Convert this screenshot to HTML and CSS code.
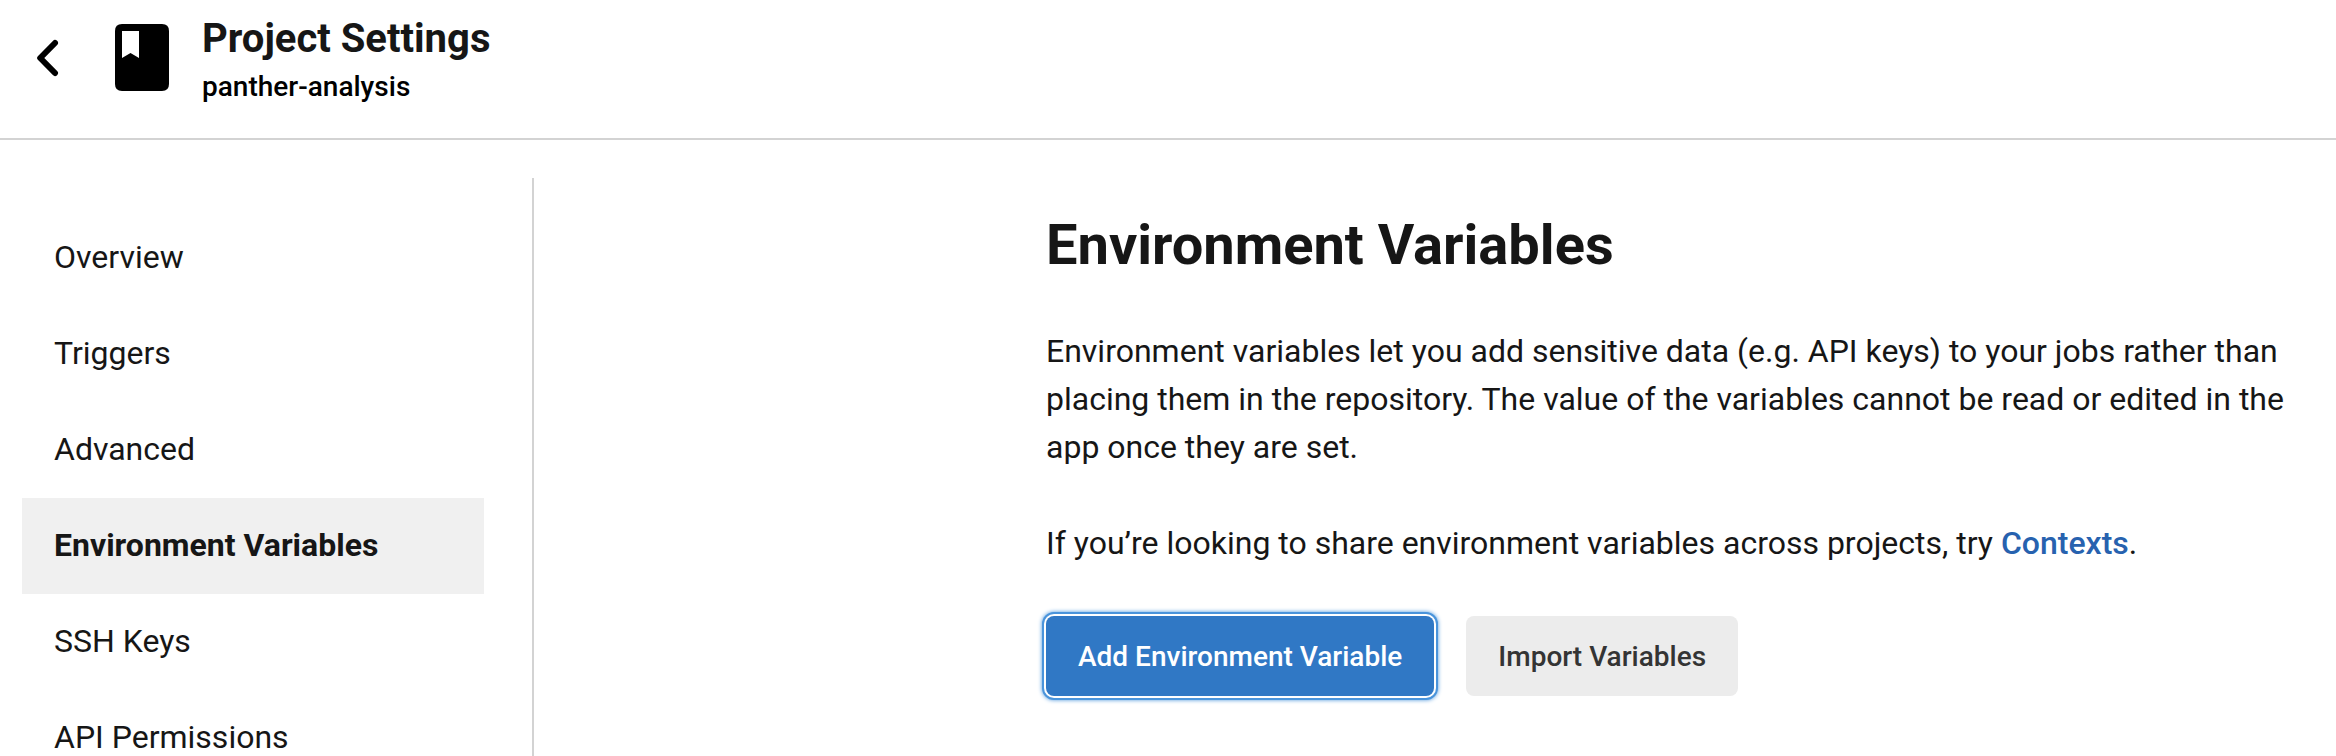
FILE: index.html
```html
<!DOCTYPE html>
<html lang="en">
<head>
<meta charset="utf-8">
<title>Project Settings</title>
<link rel="stylesheet" href="styles.css">
</head>
<body>
<header class="header">
  <svg class="back" viewBox="0 0 22 38"><path d="M18 4 3.200 19 18 34"/></svg>
  <svg class="book" viewBox="0 0 54 67"><path fill-rule="evenodd" d="M7 0H47Q54 0 54 7V60Q54 67 47 67H7Q0 67 0 60V7Q0 0 7 0ZM7 7V34L15.500 29 24 34V7Z"/></svg>
  <div class="heading">
    <div class="title">Project Settings</div>
    <div class="subtitle">panther-analysis</div>
  </div>
</header>
<div class="layout">
  <nav class="sidebar">
    <a class="item">Overview</a>
    <a class="item">Triggers</a>
    <a class="item">Advanced</a>
    <a class="item active">Environment Variables</a>
    <a class="item">SSH Keys</a>
    <a class="item">API Permissions</a>
  </nav>
  <main class="content">
    <h1 class="page-title">Environment Variables</h1>
    <p class="text">Environment variables let you add sensitive data (e.g. API keys) to your jobs rather than<br>placing them in the repository. The value of the variables cannot be read or edited in the<br>app once they are set.</p>
    <p class="text">If you’re looking to share environment variables across projects, try <a class="link">Contexts</a>.</p>
    <div class="actions">
      <button class="button primary">Add Environment Variable</button>
      <button class="button">Import Variables</button>
    </div>
  </main>
</div>
</body>
</html>
```
FILE: styles.css
```css
* { box-sizing: border-box; }
body {
  margin: 0;
  height: 756px;
  overflow: hidden;
  background: #fff;
  color: #161616;
  font-family: Roboto, sans-serif;
}
.header {
  display: flex;
  align-items: flex-start;
  height: 140px;
  padding-left: 37px;
  border-bottom: 2px solid #d3d3d3;
}
.back {
  width: 22px;
  height: 38px;
  margin: 39px 56px 0 0;
  fill: none;
  stroke: #000;
  stroke-width: 6;
  stroke-linecap: round;
  stroke-linejoin: round;
}
.book { width: 54px; height: 67px; margin: 24px 33px 0 0; }
.heading { padding-top: 15px; white-space: nowrap; }
.title { font-size: 40px; line-height: 48px; font-weight: 700; }
.subtitle { margin-top: 4px; font-size: 28px; line-height: 40px; font-weight: 500; color: #000; }
.layout { display: flex; height: 616px; }
.sidebar {
  width: 534px;
  height: 578px;
  margin-top: 38px;
  padding: 32px 48px 0 22px;
  border-right: 2px solid #d3d3d3;
  overflow: hidden;
}
.item {
  display: block;
  height: 96px;
  padding-left: 32px;
  font-size: 32px;
  line-height: 94px;
}
.active { background: #f0f0f0; font-weight: 700; }
.content { padding: 73px 0 0 512px; white-space: nowrap; }
.page-title { margin: 0 0 50px; font-size: 56px; line-height: 64px; font-weight: 700; }
.text { margin: 0 0 48px; font-size: 32px; line-height: 48px; }
.link { color: #2762af; font-weight: 500; }
.actions { display: flex; gap: 32px; margin-top: 49px; }
.button {
  height: 80px;
  padding: 1px 32px 0;
  border: 0;
  border-radius: 8px;
  background: #ececec;
  color: #343434;
  font: 500 28px/79px Roboto, sans-serif;
}
.primary {
  background: #3078c5;
  color: #fff;
  box-shadow: 0 0 0 2px #fff, 0 0 0 4px #4a94db, 0 0 4px 4px #4a94db;
}
```
